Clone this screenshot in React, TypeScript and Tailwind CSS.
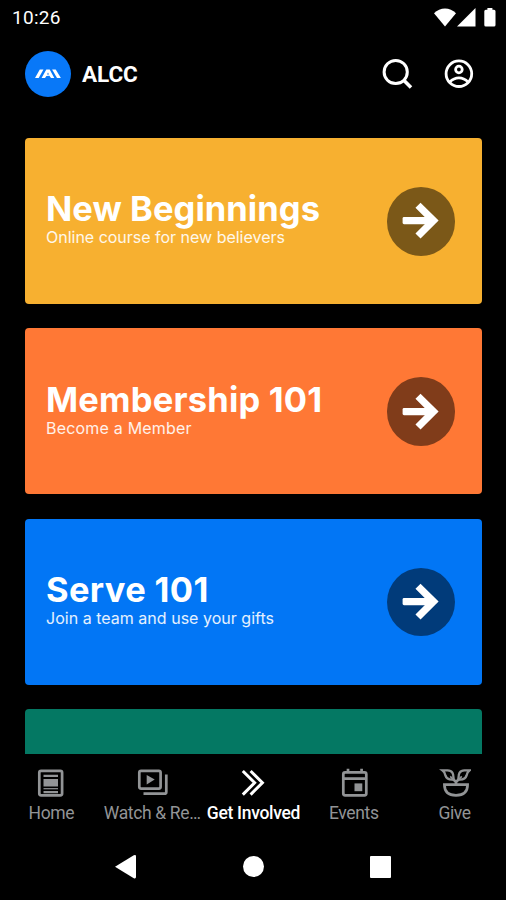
import React from "react";

const cards = [
  { title: "New Beginnings", subtitle: "Online course for new believers", bg: "bg-[#f7b030]", dot: "bg-[#7b5818]", track: "tracking-[0.05px]", sub: "tracking-[-0.01px]" },
  { title: "Membership 101", subtitle: "Become a Member", bg: "bg-[#ff7835]", dot: "bg-[#803c1a]", track: "tracking-[0.2px]", sub: "tracking-[0.2px]" },
  { title: "Serve 101", subtitle: "Join a team and use your gifts", bg: "bg-[#0276f5]", dot: "bg-[#013b7a]", track: "tracking-[0.35px]", sub: "tracking-[0.02px]" },
];

function StatusBar() {
  return (
    <div className="flex h-[36px] shrink-0 items-center justify-between pl-[12px] pr-[9px]">
      <span className="text-[19px] leading-[36px] tracking-[0.3px]">10:26</span>
      <svg width="64" height="20" viewBox="0 0 64 20" fill="#fff">
        <path d="M1 5.2C7-1.1 17-1.1 23 5.2L12 18.5Z" />
        <path d="M42.5 0v18.5H24Z" />
        <path d="M54.4 0h5v1.8h1.6q1.5 0 1.5 1.5v13.7q0 1.5-1.5 1.5h-8.2q-1.5 0-1.5-1.5V3.3q0-1.5 1.5-1.5h1.6z" />
      </svg>
    </div>
  );
}

function Header() {
  return (
    <header className="mt-[15px] flex h-[46px] shrink-0 items-center pl-[25px] pr-[31px]">
      <div className="flex size-[46px] items-center justify-center rounded-full bg-[#0878f8]">
        <svg width="26" height="10" viewBox="0 0 26 10" fill="#fff">
          <path d="M4.8.5h3.7L3.7 9H0Z" />
          <path d="M11.3.5h3.4L19.3 9H16l-1.6-2.3-3 .4L10 9H6.6ZM13 3.6l-1 2h2Z" fillRule="evenodd" />
          <path d="M17.1.5h3.6L25.9 9H22Z" />
        </svg>
      </div>
      <span className="ml-[11px] grow text-[22.5px] font-bold leading-[46px] tracking-[-0.1px]">ALCC</span>
      <svg width="32" height="32" viewBox="0 0 32 32" fill="none" stroke="#fff" strokeWidth="3">
        <circle cx="13.7" cy="14" r="11.6" />
        <path d="m21.8 22.2 7.2 7.2" strokeWidth="3.6" />
      </svg>
      <svg className="ml-[29px]" width="32" height="32" viewBox="0 0 32 32" fill="none" stroke="#fff" strokeWidth="2.8">
        <circle cx="15.9" cy="15.7" r="12.8" />
        <circle cx="15.9" cy="11.5" r="3.3" />
        <path d="M6.8 24q4-4.1 9.1-4.1t9.1 4.1" />
      </svg>
    </header>
  );
}

function NavItem({ label, active, children }: { label: string; active?: boolean; children: React.ReactNode }) {
  return (
    <div className={"flex min-w-0 flex-col items-center " + (active ? "text-white" : "text-[#929496]")}>
      <svg width="32" height="32" viewBox="0 0 32 32" fill="none" stroke="currentColor" strokeWidth="2.7">
        {children}
      </svg>
      <span className={"mt-[2px] whitespace-nowrap leading-[24px] " + (active ? "pl-[1px] text-[17.5px] font-medium tracking-[-0.3px]" : "text-[17.5px] tracking-[-0.35px]")}>{label}</span>
    </div>
  );
}

export default function App() {
  return (
    <div className="flex h-[900px] w-[506px] flex-col overflow-hidden bg-black font-[Roboto,sans-serif] text-white">
      <StatusBar />
      <Header />
      <main className="mt-[40.8px] flex h-[616.2px] shrink-0 flex-col gap-[24.4px] overflow-hidden pl-[25px] pr-[24px]">
        {cards.map((c) => (
          <section key={c.title} className={"flex h-[166px] shrink-0 items-center justify-between rounded-[4px] pl-[21px] pr-[27px] " + c.bg}>
            <div className="pb-[4px] font-[Inter,sans-serif]">
              <h2 className={"whitespace-nowrap text-[34.5px] font-bold leading-[37px] " + c.track}>{c.title}</h2>
              <p className={"whitespace-nowrap text-[16px] leading-[20px] text-white/90 " + c.sub}>{c.subtitle}</p>
            </div>
            <div className={"mt-px flex size-[68.5px] items-center justify-center rounded-full " + c.dot}>
              <svg width="40" height="40" viewBox="0 0 40 40" fill="none" stroke="#fff" strokeWidth="7.2">
                <path d="M3 16h29v7.2H3q-1.4 0-1.4-1.4v-4.4Q1.6 16 3 16Z" fill="#fff" stroke="none" />
                <path d="m17 4.2 15.5 15.4L17 35" />
              </svg>
            </div>
          </section>
        ))}
        <section className="h-[166px] shrink-0 rounded-[4px] bg-[#047863]" />
      </main>
      <nav className="grid h-[80px] shrink-0 grid-cols-5 px-px pt-[13px]">
        <NavItem label="Home">
          <rect x="4.3" y="3.8" width="22.8" height="24.6" rx="1.8" />
          <path d="M8.5 8.8H23M8.5 25.2H23" strokeWidth="2.2" />
          <path d="M8.5 12H23v7.5H8.5z" fill="currentColor" stroke="none" />
          <path d="M8.5 21.7H23" strokeWidth="1.2" />
        </NavItem>
        <NavItem label="Watch &amp; Re…">
          <rect x="3.3" y="3.8" width="21.3" height="17.8" rx="1.8" />
          <path d="M30.3 7.5v17.4q0 1.8-1.8 1.8H7.5" />
          <path d="m10.7 8 8 4.6-8 4.8z" fill="currentColor" stroke="none" />
        </NavItem>
        <NavItem label="Get Involved" active>
          <path d="m5.8 4 11.8 11.8L5.8 27.6M13.6 4l11.8 11.8-11.8 11.8" strokeWidth="3" />
        </NavItem>
        <NavItem label="Events">
          <rect x="5.3" y="5.4" width="23" height="23" rx="1.8" />
          <path d="M5 11.6h23M10 1.8v4M23.6 1.8v4" />
          <path d="M16.5 16.4h7.8v7.8h-7.8z" fill="currentColor" stroke="none" />
        </NavItem>
        <NavItem label="Give">
          <path d="M5.4 17.6h23.2q0 10.8-11.600 10.8T5.400 17.600Z" />
          <path d="M17 17.500v-2.500l-3-3M17 15l3-3" strokeWidth="2.6" />
          <path d="M3.400 3.400Q5.800 5.200 6.400 8.400q1.400 4.800 8 4.200Q15.200 3.400 8.600 3.400ZM30.600 3.400Q28.200 5.200 27.600 8.400q-1.400 4.800-8 4.200Q18.800 3.400 25.400 3.400Z" strokeWidth="2.4" />
          <path d="m14.400 12.600-3.200-3.200M19.600 12.600l3.200-3.200" strokeWidth="1.600" />
        </NavItem>
      </nav>
      <div className="flex grow items-start justify-between pl-[115px] pr-[115.5px] pt-[20px]">
        <svg width="22" height="26" viewBox="0 0 22 26" fill="#fff">
          <path d="M0 12.8 18.8 1.3Q21 .4 21 2.3v20.8q0 1.9-2.2 1.2Z" />
        </svg>
        <div className="mt-[2px] size-[21px] rounded-full bg-white" />
        <div className="mt-[2px] h-[22px] w-[21px] rounded-[1px] bg-white" />
      </div>
    </div>
  );
}
